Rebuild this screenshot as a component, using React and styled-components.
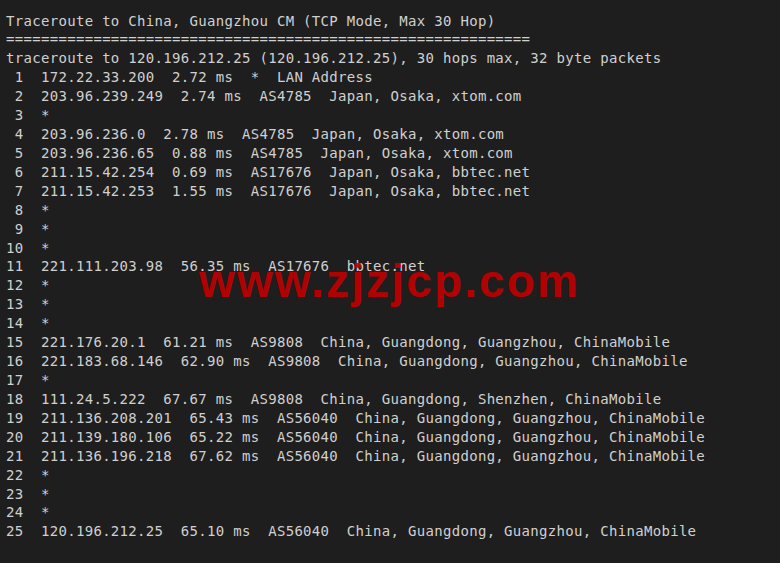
import React from 'react'
import styled, { createGlobalStyle } from 'styled-components'

const GlobalStyle = createGlobalStyle`
html, body {
  margin: 0;
  padding: 0;
  background: #1e1e1e;
}
`;

const Terminal = styled.div`
position: relative;
width: 780px;
height: 563px;
background: #1e1e1e;
overflow: hidden;
box-sizing: border-box;
padding: 11.5px 0 0 6px;
`;

const Output = styled.pre`
margin: 0;
font-family: "DejaVu Sans Mono", "Liberation Mono", monospace;
font-size: 14px;
letter-spacing: 0.31px;
line-height: 18.92px;
color: #d0d0d0;
white-space: pre;
`;

const Watermark = styled.div`
position: absolute;
left: 199px;
top: 258px;
font-family: "Liberation Sans", Arial, sans-serif;
font-weight: 700;
font-size: 46px;
letter-spacing: 2.15px;
line-height: 1;
color: #c00000;
opacity: 0.9;
pointer-events: none;
`;

const lines = [
  'Traceroute to China, Guangzhou CM (TCP Mode, Max 30 Hop)',
  '='.repeat(60),
  'traceroute to 120.196.212.25 (120.196.212.25), 30 hops max, 32 byte packets',
  ' 1  172.22.33.200  2.72 ms  *  LAN Address',
  ' 2  203.96.239.249  2.74 ms  AS4785  Japan, Osaka, xtom.com',
  ' 3  *',
  ' 4  203.96.236.0  2.78 ms  AS4785  Japan, Osaka, xtom.com',
  ' 5  203.96.236.65  0.88 ms  AS4785  Japan, Osaka, xtom.com',
  ' 6  211.15.42.254  0.69 ms  AS17676  Japan, Osaka, bbtec.net',
  ' 7  211.15.42.253  1.55 ms  AS17676  Japan, Osaka, bbtec.net',
  ' 8  *',
  ' 9  *',
  '10  *',
  '11  221.111.203.98  56.35 ms  AS17676  bbtec.net',
  '12  *',
  '13  *',
  '14  *',
  '15  221.176.20.1  61.21 ms  AS9808  China, Guangdong, Guangzhou, ChinaMobile',
  '16  221.183.68.146  62.90 ms  AS9808  China, Guangdong, Guangzhou, ChinaMobile',
  '17  *',
  '18  111.24.5.222  67.67 ms  AS9808  China, Guangdong, Shenzhen, ChinaMobile',
  '19  211.136.208.201  65.43 ms  AS56040  China, Guangdong, Guangzhou, ChinaMobile',
  '20  211.139.180.106  65.22 ms  AS56040  China, Guangdong, Guangzhou, ChinaMobile',
  '21  211.136.196.218  67.62 ms  AS56040  China, Guangdong, Guangzhou, ChinaMobile',
  '22  *',
  '23  *',
  '24  *',
  '25  120.196.212.25  65.10 ms  AS56040  China, Guangdong, Guangzhou, ChinaMobile',
];

const App = () => {
  return (
    <>
      <GlobalStyle />
      <Terminal>
        <Output>{lines.join('\n')}</Output>
        <Watermark>www.zjzjcp.com</Watermark>
      </Terminal>
    </>
  )
}

export default App
